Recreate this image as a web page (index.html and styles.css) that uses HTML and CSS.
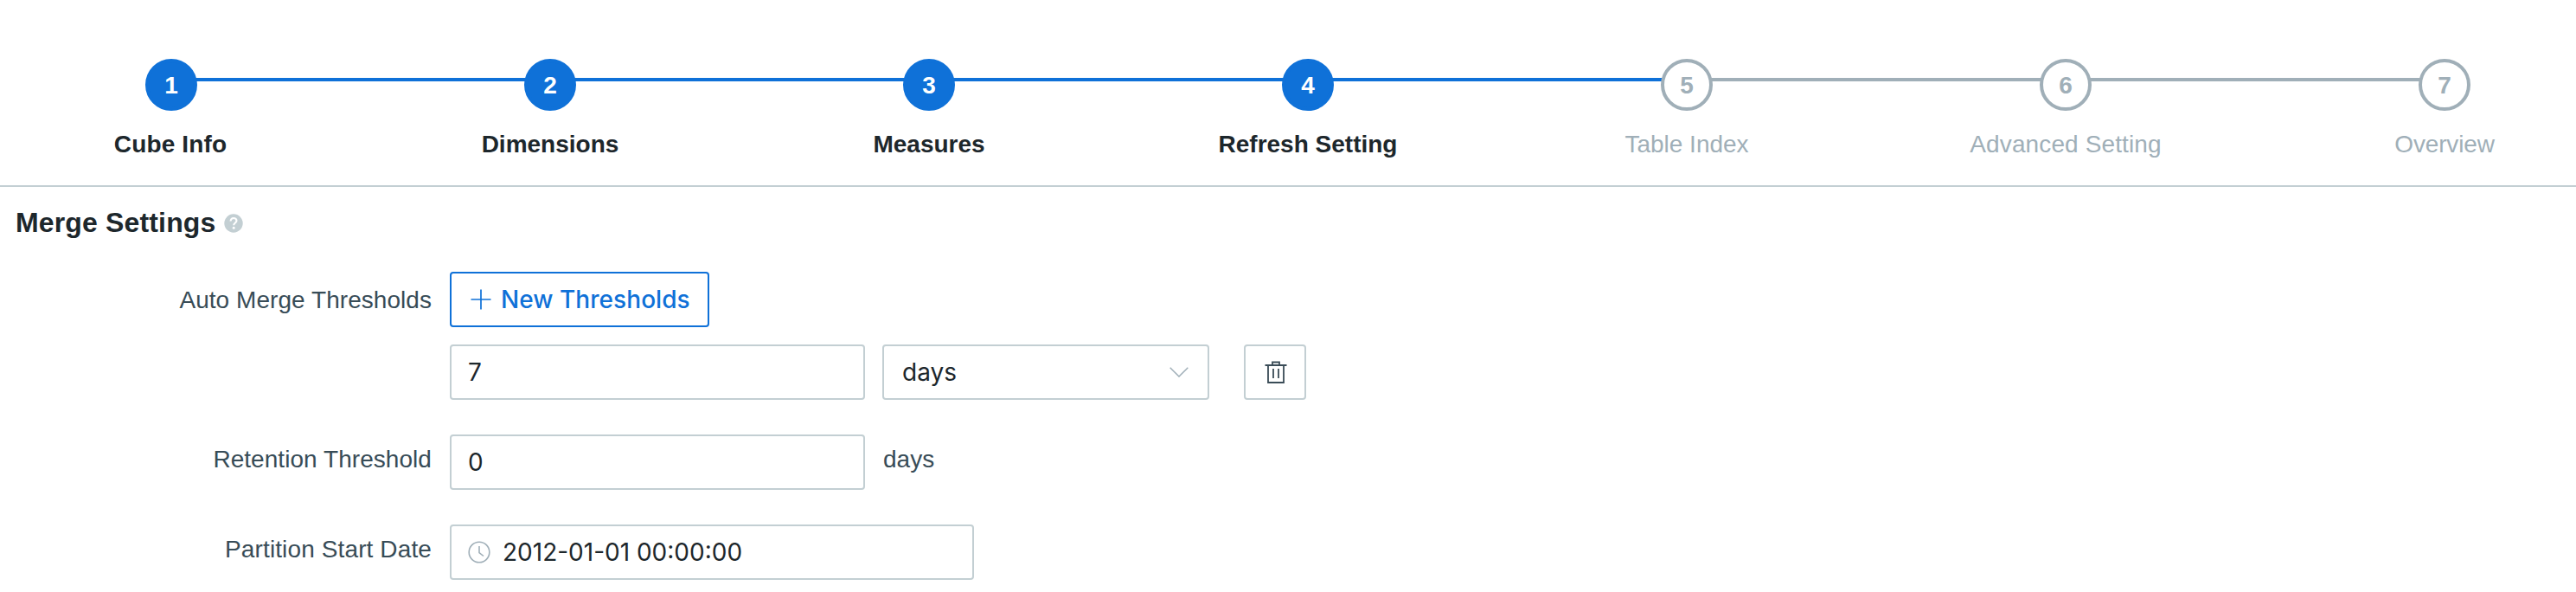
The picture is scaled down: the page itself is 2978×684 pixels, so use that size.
FILE: index.html
```html
<!DOCTYPE html>
<html lang="en">
<head>
<meta charset="utf-8">
<title>Cube Refresh Setting</title>
<link rel="stylesheet" href="styles.css">
</head>
<body>
<ol class="steps">
  <li class="step done"><div class="head"><span class="num">1</span></div><span class="name cube">Cube Info</span></li>
  <li class="step done"><div class="head"><span class="num">2</span></div><span class="name">Dimensions</span></li>
  <li class="step done"><div class="head"><span class="num">3</span></div><span class="name">Measures</span></li>
  <li class="step done"><div class="head"><span class="num">4</span></div><span class="name">Refresh Setting</span></li>
  <li class="step"><div class="head"><span class="num">5</span></div><span class="name">Table Index</span></li>
  <li class="step"><div class="head"><span class="num">6</span></div><span class="name spaced">Advanced Setting</span></li>
  <li class="step"><div class="head"><span class="num">7</span></div><span class="name tight">Overview</span></li>
</ol>
<main class="settings">
  <h2 class="title"><span>Merge Settings</span>
    <svg class="help" viewBox="0 0 22 22"><circle cx="11" cy="11" r="10.700" fill="#c3cfd3"/><path d="M7.600 8.600C7.600 6.200 9 5 11 5s3.500 1.200 3.500 3.100c0 2.400-3.300 2.500-3.300 5.200" fill="none" stroke="#fff" stroke-width="2.100"/><circle cx="11.200" cy="16.300" r="1.500" fill="#fff"/></svg>
  </h2>
  <div class="row first">
    <span class="label">Auto Merge Thresholds</span>
    <button class="new"><svg class="plus" viewBox="0 0 24 24"><path d="M12 .5v23M.5 12h23" fill="none" stroke="#0f71d8" stroke-width="1.700"/></svg><span>New Thresholds</span></button>
  </div>
  <div class="row">
    <span class="label"></span>
    <div class="box amount">7</div>
    <div class="box unit"><span>days</span><svg class="chevron" viewBox="0 0 22 12"><path d="M.7.700 11 11 21.300.700" fill="none" stroke="#a0afb8" stroke-width="1.500"/></svg></div>
    <button class="box trash"><svg viewBox="0 0 26 26"><path d="M.5 5h25M9 5V1.500h8V5M4 5v20h18V5M10 9v11M16 9v11" fill="none" stroke="#3a4c57" stroke-width="1.800"/></svg></button>
  </div>
  <div class="row">
    <span class="label raised">Retention Threshold</span>
    <div class="box amount">0</div>
    <span class="suffix raised">days</span>
  </div>
  <div class="row">
    <span class="label raised wide">Partition Start Date</span>
    <div class="box date"><svg class="clock" viewBox="0 0 26 26"><circle cx="13" cy="13" r="11.800" fill="none" stroke="#a0afb8" stroke-width="1.600"/><path d="M13 6v7.500l5 4" fill="none" stroke="#a0afb8" stroke-width="1.600"/></svg><span>2012-01-01 00:00:00</span></div>
  </div>
</main>
</body>
</html>
```
FILE: styles.css
```css
* { box-sizing: border-box; }
body {
  margin: 0;
  height: 684px;
  overflow: hidden;
  background: #fff;
  color: #384c57;
  font: 28px/32px "Liberation Sans", Arial, sans-serif;
}
.steps {
  display: flex;
  margin: 0;
  padding: 68px 0 0;
  height: 216px;
  list-style: none;
  border-bottom: 2px solid #c3cfd3;
}
.step {
  width: 438px;
  flex: none;
  display: flex;
  flex-direction: column;
  align-items: center;
  gap: 23px;
  color: #a0afb8;
}
.step:first-child { margin-left: -21px; }
.head { display: flex; align-items: flex-start; width: 100%; }
.head::before, .head::after {
  content: "";
  flex: 1;
  height: 4px;
  margin-top: 22px;
  background: #a0afb8;
}
.step:first-child .head::before, .step:last-child .head::after { background: none; }
.done .head::before, .done .head::after, .done + .step .head::before { background: #0f71d8; }
.head::before { margin-right: -3px; }
.head::after { margin-left: -3px; }
.num {
  width: 60px;
  height: 60px;
  border: 4px solid #a0afb8;
  border-radius: 50%;
  background: #fff;
  font-weight: 700;
  line-height: 53px;
  text-align: center;
  position: relative;
}
.done .num { background: #0f71d8; border-color: #0f71d8; color: #fff; }
.name { white-space: nowrap; }
.done .name { color: #1d272c; font-weight: 700; }
.name.cube { letter-spacing: .15px; margin-right: 2px; }
.name.spaced { letter-spacing: .12px; }
.name.tight { letter-spacing: -.15px; }
.title {
  display: flex;
  align-items: center;
  gap: 10px;
  margin: 0;
  padding: 23px 0 0 18px;
  font-size: 32px;
  line-height: 36px;
  letter-spacing: .15px;
  color: #1d272c;
}
.help { width: 22px; height: 22px; margin-top: 2px; }
.row { display: flex; height: 64px; margin-bottom: 40px; }
.first { margin: 39px 0 20px; }
.label {
  width: 500px;
  margin-right: 20px;
  padding-right: 1px;
  line-height: 65px;
  letter-spacing: .05px;
  text-align: right;
  white-space: nowrap;
}
.wide { letter-spacing: .12px; }
.suffix { margin-left: 21px; line-height: 64px; }
.raised { line-height: 58px; }
.box, .new {
  height: 64px;
  display: flex;
  align-items: center;
  border: 2px solid #c3cfd3;
  border-radius: 4px;
  background: #fff;
  color: #1d272c;
  font: 28px/60px Inter, sans-serif;
  white-space: nowrap;
}
.amount { width: 480px; padding-left: 19px; }
.unit { width: 378px; margin-left: 20px; padding: 0 22px 0 21px; justify-content: space-between; }
.chevron { width: 22px; height: 12px; }
.trash { width: 72px; margin-left: 40px; padding: 0 0 0 1px; justify-content: center; }
.trash svg, .clock { width: 26px; height: 26px; }
.new {
  width: 300px;
  padding: 0 0 0 22px;
  gap: 11px;
  border-color: #0f71d8;
  color: #0f71d8;
  font-weight: 500;
  letter-spacing: .05px;
}
.plus { width: 24px; height: 24px; }
.date { width: 606px; padding-left: 19px; gap: 14px; }
```
